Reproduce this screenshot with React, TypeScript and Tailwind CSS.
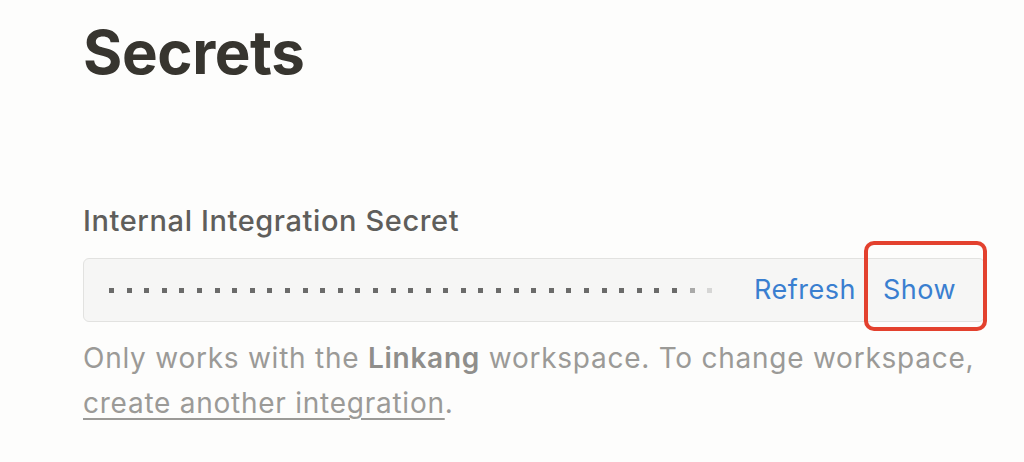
import React from 'react';

const Dots = () => {
  const dots = Array.from({ length: 35 });
  return (
    <div className="flex items-center gap-[12.6px]">
      {dots.map((_, i) => (
        <span
          key={i}
          className={
            i === 34
              ? 'block w-[5px] h-[5px] bg-[#d6d6d5]'
              : i === 33
              ? 'block w-[5px] h-[5px] bg-[#a9a9a8]'
              : 'block w-[5px] h-[5px] bg-[#6b6b6a]'
          }
        />
      ))}
    </div>
  );
};

export default function App() {
  return (
    <div className="min-h-screen w-full bg-[#fdfdfc] pl-[83px] pt-[12px] font-['Inter',sans-serif]">
      <h1 className="text-[60px] font-bold leading-[80px] tracking-[-0.4px] text-[#37352f]">Secrets</h1>

      <div className="mt-[111px] w-[902px]">
        <div className="text-[29px] font-medium leading-[36px] tracking-[0.6px] text-[#5f5e5b]">
          Internal Integration Secret
        </div>

        <div className="mt-[19px] flex h-[64px] items-center rounded-[6px] border border-[#e2e2e0] bg-[#f6f6f5] pl-[25px]">
          <Dots />
          <div className="ml-auto flex items-center">
            <button className="text-[27px] leading-[36px] tracking-[0.5px] text-[#3a7fd0]">Refresh</button>
            <div className="relative ml-[27px] mr-[28px]">
              <button className="text-[27px] leading-[36px] tracking-[0.5px] text-[#3a7fd0]">Show</button>
              <div className="pointer-events-none absolute left-[-19px] top-[-31px] h-[90px] w-[123px] rounded-[10px] border-[4px] border-[#e3412e]" />
            </div>
          </div>
        </div>

        <p className="mt-[14px] text-[28px] leading-[45px] tracking-[0.75px] text-[#9b9a97]">
          Only works with the <span className="font-semibold text-[#8f8e8b]">Linkang</span> workspace. To change workspace,
          <br />
          <a className="underline underline-offset-[5px] decoration-[2px]">create another integration</a>.
        </p>
      </div>
    </div>
  );
}
